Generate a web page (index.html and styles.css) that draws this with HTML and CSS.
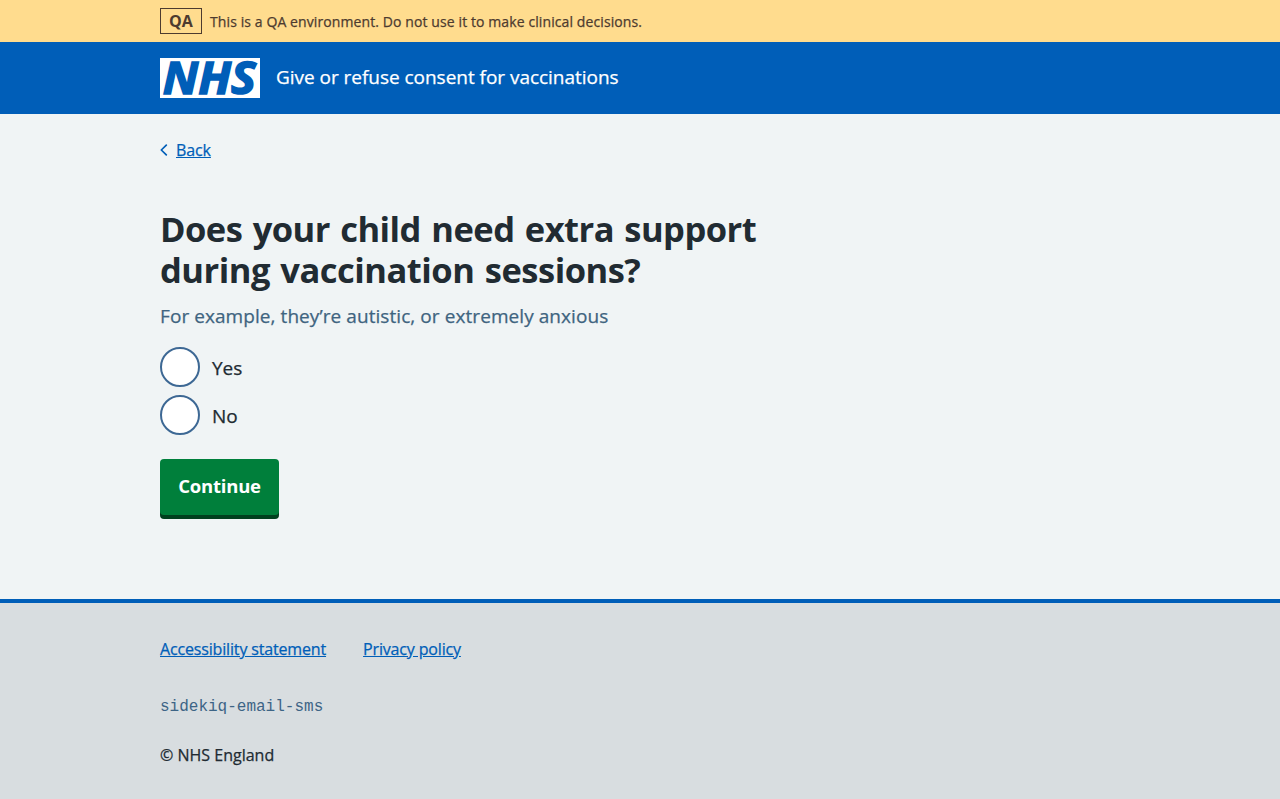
FILE: index.html
```html
<!DOCTYPE html>
<html lang="en">
<head>
<meta charset="utf-8">
<title>Does your child need extra support during vaccination sessions?</title>
<link rel="stylesheet" href="styles.css">
</head>
<body>
<div class="environment">
  <div class="container environment-inner">
    <strong class="tag">QA</strong>
    <span class="environment-text">This is a QA environment. Do not use it to make clinical decisions.</span>
  </div>
</div>
<header class="header">
  <div class="container header-inner">
    <svg class="logo" viewBox="0 0 100 40" width="100" height="40" role="img" aria-label="NHS">
      <rect width="100" height="40" fill="#fff"/>
      <text class="logo-text" x="2.8" y="35.9" textLength="93" lengthAdjust="spacingAndGlyphs">NHS</text>
    </svg>
    <span class="service-name">Give or refuse consent for vaccinations</span>
  </div>
</header>
<main class="container main">
  <a class="back" href="#">
    <svg class="back-icon" viewBox="0 0 8 12" width="8" height="12" aria-hidden="true"><path d="M6.3 1.2 1.3 6l5 4.8" fill="none" stroke="currentColor" stroke-width="1.7" stroke-linecap="round" stroke-linejoin="round"/></svg>
    <span class="back-text">Back</span>
  </a>
  <form class="form">
    <h1 class="title"><span class="title-line title-first">Does your child need extra support</span> <span class="title-line title-second">during vaccination sessions?</span></h1>
    <p class="hint">For example, they’re autistic, or extremely anxious</p>
    <div class="radios">
      <label class="radio"><input class="radio-input" type="radio" name="support"><span class="radio-label">Yes</span></label>
      <label class="radio"><input class="radio-input" type="radio" name="support"><span class="radio-label">No</span></label>
    </div>
    <button class="button" type="button">Continue</button>
  </form>
</main>
<footer class="footer">
  <div class="container">
    <nav class="footer-links">
      <a class="footer-link" href="#">Accessibility statement</a>
      <a class="footer-link" href="#">Privacy policy</a>
    </nav>
    <p class="release">sidekiq-email-sms</p>
    <p class="copyright">© NHS England</p>
  </div>
</footer>
</body>
</html>
```
FILE: styles.css
```css
* { box-sizing: border-box; }
body {
  margin: 0;
  min-height: 799px;
  display: flex;
  flex-direction: column;
  background: #f0f4f5;
  color: #212b32;
  font-family: "Open Sans", "Noto Sans", Arial, sans-serif;
  font-size: 16px;
  -webkit-text-stroke: 0.25px currentColor;
}
.container { width: 960px; margin: 0 auto; }
.environment { height: 42px; background: #ffdc8e; color: #4d3b2f; }
.environment-inner { height: 42px; display: flex; align-items: center; gap: 8px; }
.tag {
  width: 42px; height: 26px;
  border: 1px solid #4d3b2f;
  font-size: 16px; line-height: 25px; font-weight: 700; text-align: center;
  -webkit-text-stroke: 0;
}
.environment-text { font-size: 14px; line-height: 24px; letter-spacing: 0.1px; padding-top: 1px; }
.header { height: 72px; background: #005eb8; color: #fff; }
.header-inner { height: 72px; display: flex; align-items: center; gap: 16px; }
.logo { display: block; overflow: visible; }
.logo-text { font-size: 45px; font-weight: 700; font-style: italic; fill: #005eb8; stroke: #005eb8; stroke-width: 1.6px; -webkit-text-stroke: 1.6px #005eb8; }
.service-name { font-size: 19px; line-height: 28px; letter-spacing: -0.03px; padding-bottom: 2px; }
.main { padding-top: 24px; flex: 1; }
.back { display: inline-flex; align-items: center; height: 24px; gap: 8px; color: #005eb8; text-decoration: none; }
.back-text { text-decoration: underline; line-height: 24px; letter-spacing: -0.1px; }
.form { margin-top: 46px; }
.title { margin: 0; font-size: 34.5px; line-height: 41px; font-weight: 700; word-spacing: 2px; white-space: nowrap; -webkit-text-stroke: 0; }
.title-line { display: block; }
.title-first { letter-spacing: -0.54px; }
.title-second { letter-spacing: -0.5px; }
.hint { margin: 12px 0 0; font-size: 19px; line-height: 28px; letter-spacing: 0.07px; color: #3f6480; }
.radios { display: grid; gap: 8px; margin-top: 17px; }
.radio { display: flex; align-items: center; gap: 12px; height: 40px; font-size: 19px; }
.radio-input { appearance: none; width: 40px; height: 40px; margin: 0; border: 2px solid #3d6894; border-radius: 50%; background: #fff; }
.radio-label { line-height: 28px; padding-top: 2px; }
.button {
  display: block; width: 119px; height: 56px; margin: 24px 0 0; padding: 0 0 2px;
  border: 0; border-radius: 4px; background: #007f3b; box-shadow: 0 4px 0 #00401e;
  color: #fff; font: 700 18.5px/28px "Open Sans", "Noto Sans", Arial, sans-serif;
  letter-spacing: -0.2px; -webkit-text-stroke: 0;
}
.footer { height: 200px; border-top: 4px solid #005eb8; background: #d8dde0; padding-top: 34px; }
.footer-links { display: flex; gap: 37px; height: 24px; line-height: 24px; }
.footer-link { color: #005eb8; white-space: nowrap; letter-spacing: -0.16px; }
.release { margin: 34px 0 0; font: 16px/24px "Liberation Mono", monospace; color: #3d6486; -webkit-text-stroke: 0; }
.copyright { margin: 24px 0 0; line-height: 24px; }
```
